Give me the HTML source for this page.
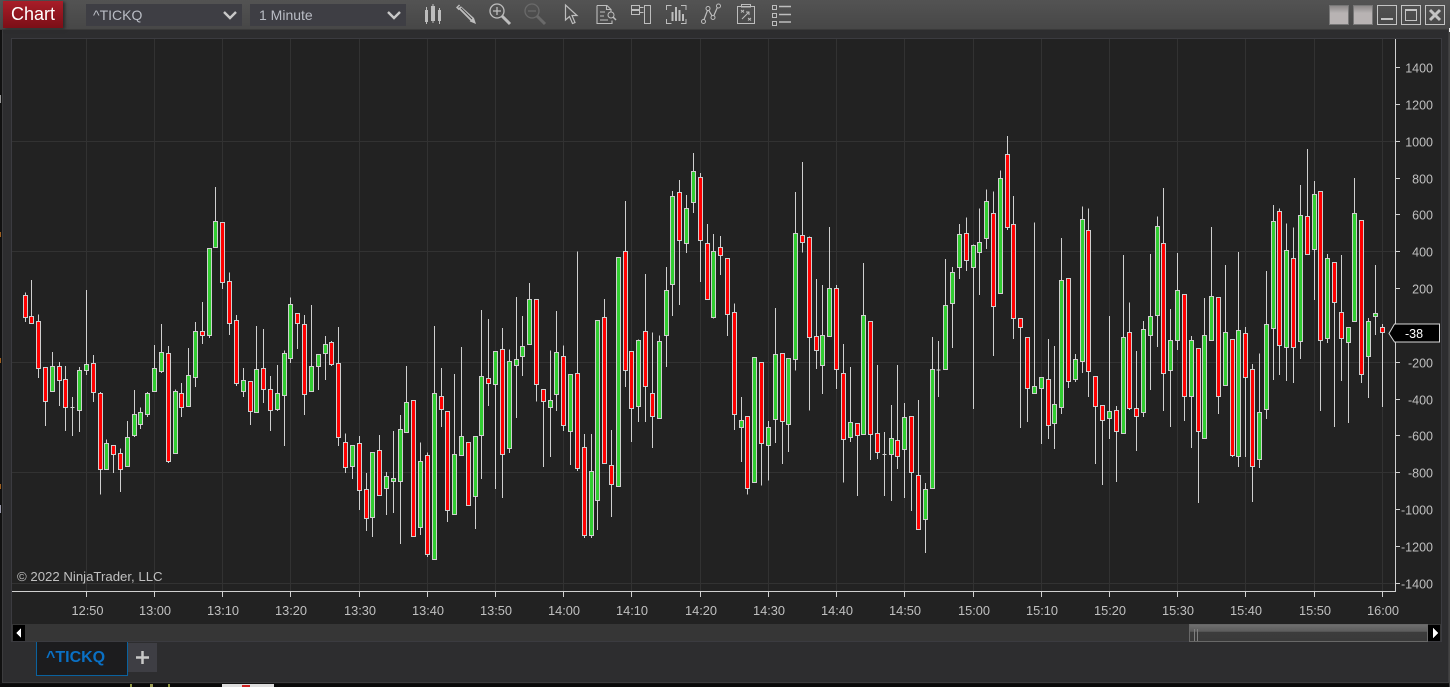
<!DOCTYPE html>
<html><head><meta charset="utf-8"><style>
html,body{margin:0;padding:0;background:#111}
body{position:relative;width:1450px;height:687px;overflow:hidden;font-family:"Liberation Sans",sans-serif}
.a{position:absolute}
#win{left:2px;top:0;width:1447px;height:683px;background:#2d2d2f;box-shadow:inset 0 0 0 1px #3c3c3e}
#bar{left:0;top:0;width:1450px;height:29px;background:linear-gradient(#535353,#474747);border-bottom:1px solid #3a3a3a}
#chartbtn{left:3px;top:1px;width:60px;height:27px;background:linear-gradient(#a81d28,#7c0f17);color:#fff;font-size:18px;line-height:27px;text-align:center;box-shadow:2px 1px 3px #2a2a2a}
.dd{top:4px;height:22px;width:156px;background:#3e3e44;color:#b9bcc4;font-size:14px;line-height:22px}
.dd svg{position:absolute;right:5px;top:6px}
#panel{left:11px;top:38px;width:1431px;height:604px;background:#222;border:1px solid #3b3b40;box-sizing:border-box}
svg text{font-family:"Liberation Sans",sans-serif}
#scroll{left:12px;top:624px;width:1429px;height:17px;background:#363636}
#thumb{left:1189px;top:624px;width:239px;height:18px;box-sizing:border-box;border:1px solid #686868;background:linear-gradient(#6e6e6e 0,#5c5c5c 40%,#3c3c3c 45%,#3a3a3a 100%)}
#tab{left:36px;top:642px;width:92px;height:34px;box-sizing:border-box;background:#1c1c1e;border:1px solid #0a629f;border-top:0;color:#0a70c4;font-weight:bold;font-size:16px;line-height:31px;padding-left:9px}
#plus{left:128px;top:643px;width:29px;height:29px;background:#3e3e44;color:#ccc;text-align:center}
</style></head><body>
<div class="a" id="win"></div>
<div class="a" id="bar"></div>
<div class="a" id="chartbtn">Chart</div>
<div class="a dd" style="left:86px;padding-left:7px;width:149px">^TICKQ<svg width="14" height="10"><path d="M1 2l6 6 6-6" fill="none" stroke="#c8c8c8" stroke-width="2.4"/></svg></div>
<div class="a dd" style="left:250px;padding-left:9px;width:147px">1 Minute<svg width="14" height="10"><path d="M1 2l6 6 6-6" fill="none" stroke="#c8c8c8" stroke-width="2.4"/></svg></div>

<svg class="a" style="left:0;top:0" width="1450" height="30" fill="none" stroke="#bdbdbd">
<g fill="#bdbdbd" stroke="none"><rect x="425" y="10" width="3" height="12"/><rect x="426" y="7" width="1" height="17"/><rect x="431" y="6" width="4" height="15"/><rect x="432.500" y="4" width="1" height="19"/><rect x="438" y="10" width="3" height="11"/><rect x="439" y="8" width="1" height="16"/></g>
<path d="M459 4.500l-3 3 14 14 6 2.500-2-6z" fill="#bdbdbd" stroke="none"/><path d="M458.500 7.500l2.500-2M461 8l11 11M459 10l11 11" stroke="#4a4a4a"/>
<circle cx="497" cy="11" r="7" stroke-width="1.300"/><path d="M497 7v8M493 11h8" stroke-width="1.300"/><path d="M502 16l8 8" stroke-width="3"/>
<g stroke="#6a6a6a"><circle cx="532" cy="11" r="7" stroke-width="1.300"/><path d="M528 11h8" stroke-width="1.300"/><path d="M537 16l8 8" stroke-width="3"/></g>
<path d="M565.500 5v15l4-3.500 3 7 2.500-1-3-7h5z" stroke-width="1.200"/>
<path d="M597 5.500h10l4 4v3M597 5.500v18h15v-3M606.500 5.500v4h5" stroke-width="1.100"/><path d="M600 12h5M600 16h4M600 20h8" stroke-width="1.100"/><circle cx="611" cy="15" r="3"/><path d="M613 17l3 3" stroke-width="1.500"/>
<path d="M631.500 5.500h8v4h-8zM631.500 10.500h8v4h-8zM639.500 7.500h4M639.500 12.500h4M644.500 5.500h6v18h-6z" stroke-width="1"/>
<path d="M666.500 10V5.500h5M681 5.500h5v4.500M666.500 19v4.500h5M681 23.500h5V19"/><path d="M672.500 12v9M676 7v14M679.500 10v11M683 14v7" stroke-width="2"/>
<path d="M703.500 21L708 9l5 8.500L718 6" stroke-width="1.200"/><g fill="#484848"><circle cx="703.500" cy="21.500" r="2"/><circle cx="708" cy="8.500" r="2"/><circle cx="713" cy="17.500" r="2"/><circle cx="718.500" cy="6" r="2"/></g>
<path d="M737.500 6.500h17v17h-17zM741.500 4.500h9v2.500h-9z" stroke-width="1"/><path d="M741 10l3 2.500M741 12.500l3-2.500M748 18l3 2.500M748 20.500l3-2.500M742 19l7-7M746 12h3v3" stroke-width="1"/>
<path d="M772.500 5.500h4v4h-4zM772.500 13.500h4v4h-4zM772.500 21.500h4v4h-4z" stroke-width="1"/><path d="M779 6.500h12M779 14.500h12M779 22h12" stroke-width="1.500"/>
<defs><linearGradient id="wg" x1="0" y1="0" x2="0" y2="1"><stop offset="0" stop-color="#8a8686"/><stop offset=".4" stop-color="#b8b3b3"/><stop offset="1" stop-color="#b8b3b3"/></linearGradient></defs>
<rect x="1329.500" y="5.500" width="19" height="19" fill="url(#wg)" stroke="#777"/><rect x="1353.500" y="5.500" width="19" height="19" fill="url(#wg)" stroke="#777"/>
<rect x="1377.500" y="5.500" width="19" height="19" stroke="#c4c4c4"/><path d="M1381 19h12" stroke-width="2" stroke="#c4c4c4"/>
<rect x="1401.500" y="5.500" width="19" height="19" stroke="#c4c4c4"/><path d="M1405.500 9.500h11v11h-11z" stroke="#c4c4c4"/><path d="M1405 10h12" stroke-width="2" stroke="#c4c4c4"/>
<rect x="1425.500" y="5.500" width="19" height="19" stroke="#c4c4c4"/><path d="M1430 10l10 10M1440 10l-10 10" stroke-width="3" stroke="#c4c4c4"/>
</svg>

<div class="a" id="panel"></div>

<svg class="a" style="left:0;top:0" width="1450" height="687" shape-rendering="crispEdges" fill="none">
<g stroke="#323232" stroke-width="1"><path d="M86.500 39V591M154.500 39V591M222.500 39V591M290.500 39V591M359.500 39V591M427.500 39V591M495.500 39V591M563.500 39V591M631.500 39V591M700.500 39V591M768.500 39V591M836.500 39V591M904.500 39V591M973.500 39V591M1041.500 39V591M1109.500 39V591M1177.500 39V591M1245.500 39V591M1314.500 39V591M1382.500 39V591"/><path d="M12 141.500H1395M12 251.500H1395M12 362.500H1395M12 472.500H1395M12 583.500H1395"/></g>

<g stroke-width="3" stroke="#cfcfcf" transform="translate(15.167,180) scale(.33333)">
<path d="M31 337V426M49 300V430M70 403V594M91 562V738M112 516V634M133 546V678M151 558V753M172 651V768M193 561V756M214 330V585M235 525V666M256 636V944M274 778V868M295 796V879M316 805V936M337 723V859M358 630V771M376 682V747M397 636V711M418 495V634M439 432V579M460 498V849M481 628V820M499 609V711M520 504V679M541 426V621M562 366V492M583 205V474M601 21V202M622 127V327M643 277V465M664 405V618M685 564V651M706 604V735M166 682h12"/>
<path fill="#f00" d="M25 346h12V412H25zM43 409h12V430H43zM64 424h12V565H64zM85 562h12V664H85zM127 559h12V601H127zM145 598h12V682H145zM229 550h12V637H229zM250 640h12V868H250zM289 796h12V823H289zM310 820h12V868H310zM454 520h12V844H454zM493 640h12V682H493zM556 454h12V466H556zM616 127h12V307H616zM637 304h12V430H637zM658 421h12V610H658zM700 604h12V694H700z"/>
<path fill="#32cd32" d="M106 559h12V634H106zM187 571h12V691H187zM208 553h12V571H208zM268 790h12V868H268zM331 772h12V859H331zM352 703h12V767H352zM370 697h12V733H370zM391 640h12V703H391zM412 565h12V634H412zM433 517h12V574H433zM475 634h12V820H475zM514 586h12V679H514zM535 454h12V592H535zM577 205h12V466H577zM595 124h12V202H595zM679 601h12V634H679z"/>
</g>

<g stroke-width="3" stroke="#cfcfcf" transform="translate(250.167,280) scale(.33333)">
<path d="M19 138V397M40 147V369M61 288V453M82 255V393M103 211V498M121 52V249M142 100V207M163 105V405M184 75V334M205 223V330M226 168V300M244 183V258M265 141V498M286 460V579M307 496V597M328 468V690M349 579V753M367 517V771M388 465V646M409 576V705M430 453V699M451 405V792M469 258V457M490 361V769M511 487V765M532 517V831M553 138V838M574 264V441M592 394V726M613 282V703M634 201V526M655 487V676M676 469V747M694 90V597M715 117V378"/>
<path fill="#f00" d="M34 265h12V328H34zM55 328h12V391H55zM136 100h12V130H136zM157 133h12V343H157zM238 187h12V253H238zM259 250h12V472H259zM280 487h12V562H280zM322 490h12V631H322zM343 628h12V715H343zM382 511h12V646H382zM484 361h12V769H484zM526 526h12V823H526zM568 349h12V388H568zM586 394h12V691H586zM649 487h12V676H649zM709 295h12V310H709z"/>
<path fill="#32cd32" d="M13 268h12V397H13zM76 340h12V388H76zM97 220h12V346H97zM115 73h12V235H115zM178 259h12V334H178zM199 223h12V259H199zM220 193h12V220H220zM301 496h12V559H301zM361 517h12V712H361zM403 589h12V625H403zM424 595h12V604H424zM445 448h12V604H445zM463 367h12V457H463zM505 544h12V742H505zM547 340h12V838H547zM607 523h12V703H607zM628 469h12V526H628zM670 469h12V649H670zM688 289h12V466H688z"/>
</g>

<g stroke-width="3" stroke="#cfcfcf" transform="translate(480.167,230) scale(.33333)">
<path d="M46 364V777M67 294V804M88 358V669M109 201V564M127 258V438M148 159V343M169 208V514M190 478V711M211 361V681M229 243V543M250 346V603M271 433V705M292 64V723M313 612V924M334 612V924M352 271V900M373 207V700M394 600V861M415 82V769M436 -87V471M454 364V636M475 328V576M496 132V576M517 307V654M538 316V565M559 111V411M577 -117V258M598 -150V225M619 -105V69M640 -231V-51M661 -171V156M682 -18V208"/>
<path fill="#f00" d="M61 358h12V673H61zM163 208h12V463H163zM184 478h12V514H184zM244 379h12V586H244zM286 430h12V715H286zM307 652h12V916H307zM367 262h12V700H367zM388 706h12V763H388zM430 64h12V421H430zM448 364h12V535H448zM490 304h12V469H490zM511 490h12V559H511zM592 -113h12V31H592zM655 -158h12V31H655zM676 40h12V208H676z"/>
<path fill="#32cd32" d="M40 364h12V463H40zM82 394h12V655H82zM103 388h12V406H103zM121 349h12V379H121zM142 208h12V343H142zM205 511h12V532H205zM223 367h12V493H223zM265 433h12V604H265zM328 724h12V916H328zM346 271h12V811H346zM409 82h12V769H409zM469 331h12V529H469zM532 334h12V565H532zM553 181h12V316H553zM571 -101h12V163H571zM613 -65h12V40H613zM634 -176h12V-83H634z"/>
</g>

<g stroke-width="3" stroke="#cfcfcf" transform="translate(710.167,150) scale(.33333)">
<path d="M10 252V506M31 258V375M52 325V558M73 460V840M94 741V936M112 799V1034M133 622V997M154 637V1007M175 813V992M196 474V879M217 610V942M235 625V906M256 126V662M277 36V308M298 259V782M319 387V657M337 405V732M358 231V559M379 405V717M400 582V998M421 651V876M442 820V1038M460 339V853M481 514V930M502 645V927M523 846V1038M544 765V1053M562 645V957M583 759V1044M604 799V1083M625 750V1138M646 999V1209M667 561V1015M685 573V741M706 327V658M517 913h12M679 660h12"/>
<path fill="#f00" d="M25 292h12V316H25zM46 325h12V493H46zM67 487h12V793H67zM106 799h12V1015H106zM148 637h12V880H148zM211 610h12V814H211zM271 256h12V277H271zM292 262h12V562H292zM313 559h12V601H313zM373 415h12V658H373zM394 670h12V868H394zM436 820h12V856H436zM475 514h12V853H475zM496 850h12V907H496zM556 871h12V919H556zM598 799h12V967H598zM619 976h12V1138H619z"/>
<path fill="#32cd32" d="M4 304h12V502H4zM88 811h12V832H88zM127 622h12V997H127zM169 832h12V886H169zM190 613h12V808H190zM229 625h12V823H229zM250 250h12V628H250zM331 556h12V646H331zM352 415h12V559H352zM415 817h12V862H415zM454 496h12V853H454zM538 865h12V913H538zM577 802h12V898H577zM640 1018h12V1108H640zM661 658h12V1015H661zM700 466h12V658H700z"/>
</g>

<g stroke-width="3" stroke="#cfcfcf" transform="translate(940.167,130) scale(.33333)">
<path d="M37 411V654M58 282V447M79 262V423M100 343V837M118 235V495M139 178V357M160 184V678M181 121V490M202 18V300M220 198V627M241 565V894M262 622V876M283 277V790M304 742V942M325 627V927M343 648V957M364 324V852M385 445V774M406 672V756M427 229V729M445 235V801M466 739V1002M487 826V1065M508 558V927M529 828V1056M550 375V910M568 517V840M589 663V963M610 573V861M631 372V780M652 259V651"/>
<path fill="#f00" d="M73 310h12V391H73zM154 250h12V529H154zM196 73h12V292H196zM214 283h12V565H214zM235 565h12V592H235zM256 622h12V775H256zM319 748h12V886H319zM379 445h12V754H379zM439 301h12V724H439zM460 739h12V829H460zM481 826h12V871H481zM523 841h12V904H523zM562 607h12V835H562zM583 835h12V859H583z"/>
<path fill="#32cd32" d="M31 427h12V520H31zM52 313h12V412H52zM94 346h12V412H94zM112 337h12V367H112zM133 214h12V325H133zM175 145h12V490H175zM277 769h12V790H277zM298 742h12V775H298zM337 823h12V880H337zM358 451h12V832H358zM400 688h12V748H400zM421 268h12V694H421zM502 844h12V865H502zM544 622h12V910H544zM604 598h12V847H604zM625 559h12V616H625zM646 289h12V556H646z"/>
</g>

<g stroke-width="3" stroke="#cfcfcf" transform="translate(1160.167,140) scale(.33333)">
<path d="M10 144V813M31 507V861M52 339V630M73 463V843M94 588V924M115 625V1089M133 474V895M154 261V601M175 472V822M196 375V736M217 598V951M235 336V981M256 561V951M277 672V1086M298 640V984M319 393V837M340 195V720M358 205V705M379 250V723M400 262V729M421 135V657M442 27V343M463 123V480M481 154V813M502 342V609M523 367V861M544 345V723M565 562V849M583 114V544M604 241V729M625 534V774M646 375V585M667 552V801"/>
<path fill="#f00" d="M4 310h12V700H4zM67 463h12V769H67zM109 625h12V874H109zM169 472h12V769H169zM211 598h12V946H211zM250 580h12V712H250zM271 688h12V979H271zM352 214h12V616H352zM394 355h12V622H394zM436 229h12V343H436zM475 154h12V601H475zM517 367h12V487H517zM538 517h12V595H538zM598 241h12V703H598zM661 562h12V577H661z"/>
<path fill="#32cd32" d="M25 601h12V691H25zM46 451h12V601H46zM88 601h12V769H88zM127 586h12V895H127zM148 469h12V601H148zM190 577h12V736H190zM229 571h12V949H229zM292 817h12V958H292zM313 553h12V808H313zM334 244h12V565H334zM373 331h12V622H373zM415 226h12V604H415zM457 163h12V328H457zM496 355h12V595H496zM559 562h12V607H559zM577 220h12V544H577zM619 544h12V649H619zM640 520h12V529H640z"/>
</g>

<g stroke="#d0d0d0"><path d="M12 591.500H1395.500M1395.500 39V592"/>
<path d="M1395 67.500h5M1395 104.500h5M1395 141.500h5M1395 178.500h5M1395 214.500h5M1395 251.500h5M1395 288.500h5M1395 325.500h5M1395 362.500h5M1395 399.500h5M1395 435.500h5M1395 472.500h5M1395 509.500h5M1395 546.500h5M1395 583.500h5"/>
<path d="M86.500 592v5M154.500 592v5M222.500 592v5M290.500 592v5M359.500 592v5M427.500 592v5M495.500 592v5M563.500 592v5M631.500 592v5M700.500 592v5M768.500 592v5M836.500 592v5M904.500 592v5M973.500 592v5M1041.500 592v5M1109.500 592v5M1177.500 592v5M1245.500 592v5M1314.500 592v5M1382.500 592v5"/></g>
</svg>

<svg class="a" style="left:0;top:0" width="1450" height="687">
<path d="M1389 333.500l5.500-9.500H1439.500v18H1394.500z" fill="#000" stroke="#d8d8d8"/>
<text x="1414" y="338" fill="#fff" font-size="12.500" text-anchor="middle">-38</text>
<g fill="#c0c0c0" font-size="12.500" text-anchor="end">
<text x="1433" y="72.500">1400</text><text x="1433" y="109.500">1200</text><text x="1433" y="146.500">1000</text><text x="1433" y="183.500">800</text><text x="1433" y="219.500">600</text><text x="1433" y="256.500">400</text><text x="1433" y="293.500">200</text><text x="1433" y="367.500">-200</text><text x="1433" y="404.500">-400</text><text x="1433" y="440.500">-600</text><text x="1433" y="477.500">-800</text><text x="1433" y="514.500">-1000</text><text x="1433" y="551.500">-1200</text><text x="1433" y="588.500">-1400</text>
</g>
<g fill="#c0c0c0" font-size="12.800" text-anchor="middle">
<text x="87.500" y="615">12:50</text><text x="155" y="615">13:00</text><text x="223" y="615">13:10</text><text x="291" y="615">13:20</text><text x="360" y="615">13:30</text><text x="428" y="615">13:40</text><text x="496" y="615">13:50</text><text x="564" y="615">14:00</text><text x="632" y="615">14:10</text><text x="701" y="615">14:20</text><text x="769" y="615">14:30</text><text x="837" y="615">14:40</text><text x="905" y="615">14:50</text><text x="974" y="615">15:00</text><text x="1042" y="615">15:10</text><text x="1110" y="615">15:20</text><text x="1178" y="615">15:30</text><text x="1246" y="615">15:40</text><text x="1315" y="615">15:50</text><text x="1383" y="615">16:00</text>
</g>
<text x="17" y="581" fill="#c0c0c0" font-size="13.200">© 2022 NinjaTrader, LLC</text>
</svg>

<div class="a" id="scroll"></div>
<div class="a" id="thumb"></div>
<svg class="a" style="left:0;top:620px" width="1450" height="25" shape-rendering="crispEdges">
<rect x="13" y="5" width="12" height="16" fill="#000"/><path d="M21 8v10l-5-5z" fill="#fff"/>
<rect x="1428" y="5" width="12" height="16" fill="#000"/><path d="M1433 8v10l5-5z" fill="#fff"/>
<path d="M1194.500 9v12M1197.500 9v12" stroke="#808080"/>
</svg>
<div class="a" id="tab">^TICKQ</div>
<div class="a" id="plus"><svg width="29" height="29"><path d="M14.500 8v13M8 14.500h13" stroke="#c8c8c8" stroke-width="2.500"/></svg></div>

<svg class="a" style="left:0;top:0" width="1450" height="687" shape-rendering="crispEdges">
<rect x="0" y="684" width="1450" height="3" fill="#0a0a0a"/>
<rect x="130" y="684" width="2" height="3" fill="#8f9640"/><rect x="150" y="684" width="3" height="3" fill="#9a9a50"/><rect x="168" y="684" width="2" height="3" fill="#8f9640"/>
<rect x="222" y="684" width="52" height="3" fill="#ddd"/><rect x="242" y="685" width="8" height="2" fill="#c22"/>
<rect x="0" y="232" width="1" height="5" fill="#a06020"/><rect x="0" y="358" width="1" height="5" fill="#a06020"/><rect x="0" y="484" width="1" height="5" fill="#a06020"/><rect x="0" y="505" width="1" height="8" fill="#99a"/><rect x="0" y="95" width="1" height="8" fill="#999"/>
<rect x="1449" y="28" width="1" height="660" fill="#444"/><rect x="1449" y="28" width="1" height="4" fill="#eee"/>
</svg>
</body></html>
